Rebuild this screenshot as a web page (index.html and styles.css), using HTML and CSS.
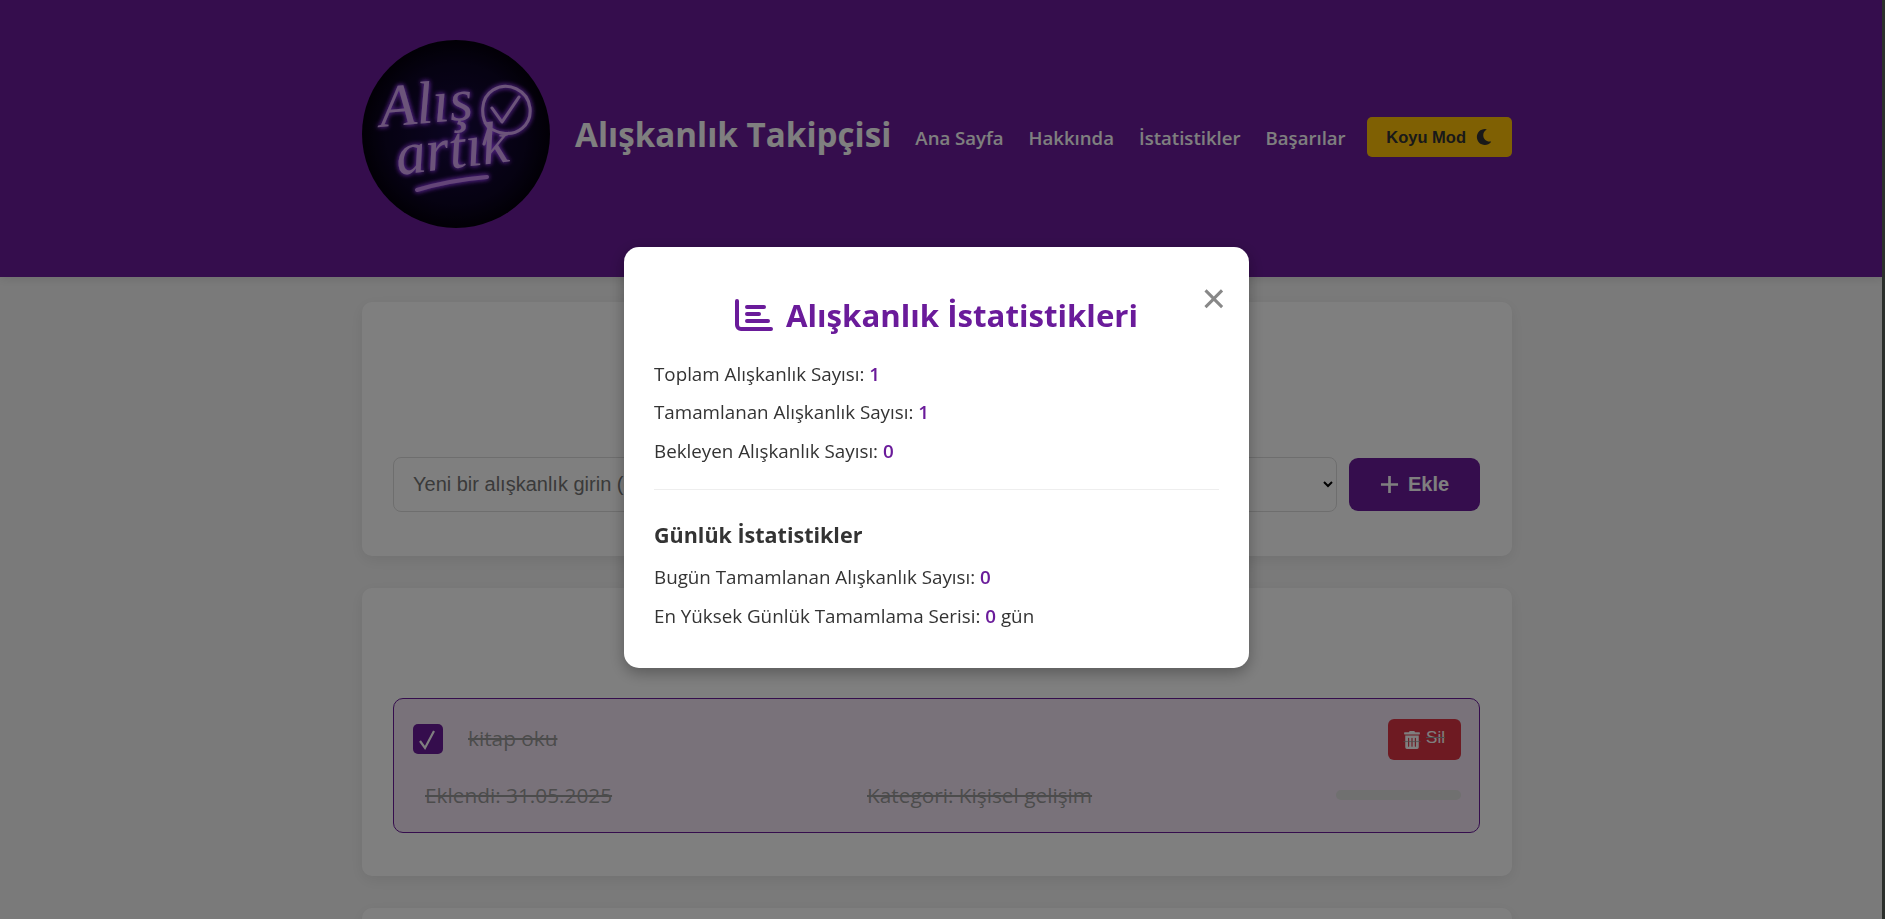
FILE: index.html
```html
<!DOCTYPE html>
<html lang="tr">
<head>
    <meta charset="UTF-8">
    <meta name="viewport" content="width=device-width, initial-scale=1.0">
    <title>Alışkanlık Takipçisi</title>
    <link rel="stylesheet" href="styles.css">
</head>
<body>
    <header class="site-header">
        <div class="wrap header-row">
            <svg class="logo" viewBox="0 0 188 188" role="img" aria-label="Alış artık">
                <defs>
                    <radialGradient id="logoBg" cx="50%" cy="50%" r="50%">
                        <stop offset="0" stop-color="#180a44"/>
                        <stop offset="0.75" stop-color="#0c0424"/>
                        <stop offset="1" stop-color="#04000c"/>
                    </radialGradient>
                    <filter id="glow" x="-30%" y="-30%" width="160%" height="160%">
                        <feGaussianBlur stdDeviation="2.6" result="blur"/>
                        <feFlood flood-color="#a040ff"/>
                        <feComposite in2="blur" operator="in" result="tint"/>
                        <feMerge>
                            <feMergeNode in="tint"/>
                            <feMergeNode in="tint"/>
                            <feMergeNode in="SourceGraphic"/>
                        </feMerge>
                    </filter>
                </defs>
                <circle cx="94" cy="94" r="94" fill="url(#logoBg)"/>
                <g filter="url(#glow)">
                    <text class="logo-word" x="19" y="87" transform="rotate(-5 19 87)">Alış</text>
                    <text class="logo-word" x="36" y="135" transform="rotate(-7 36 135)">artık</text>
                    <g class="logo-line">
                        <path d="M127 88 C118 78 118 58 131 50 C146 41 166 50 168 68 C170 86 154 96 140 93 C135 92 131 90 127 88 L122 104"/>
                        <path d="M130 68 L140 82 L157 57"/>
                    </g>
                    <path class="logo-swash" d="M55 150 C78 143 102 139 125 137"/>
                </g>
            </svg>
            <h1 class="site-title">Alışkanlık Takipçisi</h1>
            <nav class="main-nav">
                <a href="#">Ana Sayfa</a>
                <a href="#">Hakkında</a>
                <a href="#">İstatistikler</a>
                <a href="#">Başarılar</a>
                <button class="theme-btn" type="button">Koyu Mod
                    <svg class="moon" viewBox="0 0 512 512"><path d="M283.211 512c78.962 0 151.079-35.925 198.857-94.792 7.068-8.708-.639-21.43-11.562-19.35-124.203 23.654-238.262-71.576-238.262-196.954 0-72.222 38.662-138.635 101.498-174.394 9.686-5.512 7.25-20.197-3.756-22.23A258.156 258.156 0 0 0 283.211 0c-141.309 0-256 114.511-256 256 0 141.309 114.511 256 256 256z"/></svg>
                </button>
            </nav>
        </div>
    </header>

    <main class="wrap">
        <section class="card add-card">
            <form class="add-form">
                <input class="habit-input" type="text" placeholder="Yeni bir alışkanlık girin (örn: Su iç)">
                <select class="habit-select"><option>Kategori</option></select>
                <button class="add-btn" type="button">
                    <svg class="plus" viewBox="0 0 20 20"><path d="M10 1v18M1 10h18"/></svg>
                    Ekle
                </button>
            </form>
        </section>

        <section class="card list-card">
            <div class="habit done">
                <div class="habit-top">
                    <span class="check">
                        <svg viewBox="0 0 30 30"><path d="M7 17 L12 24 L21 7"/></svg>
                    </span>
                    <span class="habit-name">kitap oku</span>
                    <button class="del-btn" type="button">
                        <svg class="trash" viewBox="0 0 448 512"><path d="M32 464a48 48 0 0 0 48 48h288a48 48 0 0 0 48-48V128H32zm272-256a16 16 0 0 1 32 0v224a16 16 0 0 1-32 0zm-96 0a16 16 0 0 1 32 0v224a16 16 0 0 1-32 0zm-96 0a16 16 0 0 1 32 0v224a16 16 0 0 1-32 0zM432 32H312l-9.4-18.7A24 24 0 0 0 281.1 0H166.8a23.72 23.72 0 0 0-21.4 13.3L136 32H16A16 16 0 0 0 0 48v32a16 16 0 0 0 16 16h416a16 16 0 0 0 16-16V48a16 16 0 0 0-16-16z"/><path class="trash-strike" d="M-20 300H468"/></svg>
                        <span>Sil</span>
                    </button>
                </div>
                <div class="habit-meta">
                    <span class="meta-date">Eklendi: 31.05.2025</span>
                    <span class="meta-cat">Kategori: Kişisel gelişim</span>
                    <span class="progress"></span>
                </div>
            </div>
        </section>

        <section class="card empty-card"></section>
    </main>

    <div class="overlay">
        <div class="modal">
            <button class="modal-close" type="button">&times;</button>
            <h2 class="modal-title">
                <svg class="chart-icon" viewBox="0 0 38 32"><path class="axis" d="M2 2V26a4 4 0 0 0 4 4H36"/><path class="bars" d="M12 8H29M12 15H24M12 22H33"/></svg>
                Alışkanlık İstatistikleri
            </h2>
            <p class="stat">Toplam Alışkanlık Sayısı: <strong>1</strong></p>
            <p class="stat">Tamamlanan Alışkanlık Sayısı: <strong>1</strong></p>
            <p class="stat">Bekleyen Alışkanlık Sayısı: <strong>0</strong></p>
            <hr class="modal-rule">
            <h3 class="modal-sub">Günlük İstatistikler</h3>
            <p class="stat">Bugün Tamamlanan Alışkanlık Sayısı: <strong>0</strong></p>
            <p class="stat">En Yüksek Günlük Tamamlama Serisi: <strong>0</strong> gün</p>
        </div>
    </div>

    <div class="scroll-strip"></div>
</body>
</html>
```

FILE: styles.css
```css
* {
    box-sizing: border-box;
}
html, body {
    height: 919px;
    overflow: hidden;
}
body {
    margin: 0;
    font-family: "Open Sans", sans-serif;
    background-color: #f5f5f5;
    color: #333;
}
.wrap {
    width: 1150px;
    margin-left: 362px;
}

/* header */
.site-header {
    height: 277px;
    padding-top: 40px;
    background: #6a1b9a;
    box-shadow: 0 2px 10px rgba(0, 0, 0, 0.1);
}
.header-row {
    display: flex;
    align-items: center;
    height: 188px;
}
.logo {
    width: 188px;
    height: 188px;
    flex: none;
    margin-right: 25px;
}
.logo-word {
    font-family: "Liberation Serif", serif;
    font-style: italic;
    font-size: 60px;
    fill: #d8a8f5;
}
.logo-line {
    fill: none;
    stroke: #d8a8f5;
    stroke-width: 3;
    stroke-linecap: round;
    stroke-linejoin: round;
}
.logo-swash {
    fill: none;
    stroke: #c88af0;
    stroke-width: 4;
    stroke-linecap: round;
}
.site-title {
    margin: 0 24px 0 0;
    font-size: 33.2px;
    font-weight: 700;
    color: #fff;
    white-space: nowrap;
}
.main-nav {
    display: flex;
    align-items: center;
    gap: 25px;
    margin-top: 7px;
}
.main-nav a {
    font-size: 18.6px;
    font-weight: 600;
    color: #fff;
    text-decoration: none;
    white-space: nowrap;
}
.theme-btn {
    display: flex;
    align-items: center;
    justify-content: center;
    gap: 10px;
    width: 145px;
    height: 40px;
    margin: -1px 0 0 -4px;
    background: #ffc107;
    color: #333;
    border: none;
    border-radius: 5px;
    font-family: "Liberation Sans", sans-serif;
    font-size: 16.5px;
    font-weight: 700;
}
.moon {
    width: 16px;
    height: 16px;
    fill: #333;
}

/* cards */
.card {
    background: #fff;
    border-radius: 10px;
    box-shadow: 0 4px 15px rgba(0, 0, 0, 0.08);
    padding: 0 32px 0 31px;
    margin-bottom: 32px;
}
.add-card {
    height: 254px;
    margin-top: 25px;
    padding-top: 155px;
}
.add-form {
    display: flex;
    gap: 12px;
}
.habit-input {
    width: 500px;
    height: 55px;
    padding: 0 19px;
    border: 1px solid #ddd;
    border-radius: 8px;
    background: #fff;
    font-family: "Liberation Sans", sans-serif;
    font-size: 20px;
}
.habit-select {
    flex: 1;
    height: 55px;
    padding: 0 20px;
    border: 1px solid #ddd;
    border-radius: 8px;
    background: #fff;
    font-size: 18px;
}
.add-btn {
    display: flex;
    align-items: center;
    justify-content: center;
    gap: 9px;
    width: 131px;
    height: 53px;
    margin-top: 1px;
    background: #6a1b9a;
    color: #fff;
    border: none;
    border-radius: 9px;
    font-family: "Liberation Sans", sans-serif;
    font-size: 20px;
    font-weight: 700;
}
.plus {
    width: 19px;
    height: 19px;
    fill: none;
    stroke: #fff;
    stroke-width: 2.8;
}
.list-card {
    height: 288px;
    padding-top: 110px;
}
.empty-card {
    height: 200px;
}

/* habit row */
.habit {
    height: 135px;
    padding: 20px 18px 0 19px;
    background: #f3e5f5;
    border: 1px solid #6a1b9a;
    border-radius: 10px;
}
.habit-top {
    display: flex;
    align-items: flex-start;
}
.check {
    width: 30px;
    height: 30px;
    margin-top: 5px;
    background: #6a1b9a;
    border-radius: 5px;
}
.check svg {
    display: block;
    fill: none;
    stroke: #fff;
    stroke-width: 2.2;
}
.habit-name {
    margin: 5px 0 0 25px;
    flex: 1;
    font-size: 20.8px;
    color: #999;
    text-decoration: line-through;
}
.del-btn {
    display: flex;
    align-items: center;
    justify-content: center;
    gap: 6px;
    width: 73px;
    height: 41px;
    background: #dc3545;
    color: #fff;
    border: none;
    border-radius: 6px;
    font-family: "Liberation Sans", sans-serif;
    font-size: 17px;
}
.del-btn span {
    margin-bottom: 3px;
    text-decoration: line-through;
    text-decoration-color: #999;
}
.trash {
    width: 16px;
    height: 18px;
    fill: #fff;
    overflow: visible;
}
.trash-strike {
    stroke: #999;
    stroke-width: 20;
}
.habit-meta {
    display: flex;
    align-items: center;
    margin-top: 21px;
    padding-left: 12px;
    font-size: 20.8px;
    color: #999;
}
.meta-date {
    width: 442px;
    text-decoration: line-through;
}
.meta-cat {
    flex: 1;
    text-decoration: line-through;
}
.progress {
    width: 125px;
    height: 10px;
    background: #e0e0e0;
    border-radius: 5px;
}

/* statistics modal */
.overlay {
    position: fixed;
    top: 0;
    right: 3px;
    bottom: 0;
    left: 0;
    display: flex;
    justify-content: center;
    align-items: flex-start;
    padding: 247px 9px 0 0;
    background: rgba(0, 0, 0, 0.5);
}
.modal {
    position: relative;
    width: 625px;
    height: 421px;
    padding: 30px;
    background: #fff;
    border-radius: 15px;
    box-shadow: 0 5px 15px rgba(0, 0, 0, 0.3);
}
.modal-close {
    position: absolute;
    top: 32px;
    right: 23px;
    padding: 0;
    border: none;
    background: none;
    font-family: "Liberation Sans", sans-serif;
    font-size: 42px;
    line-height: 40px;
    color: #888;
}
.modal-title {
    display: flex;
    align-items: center;
    justify-content: center;
    gap: 13px;
    margin: 16px 0 24px;
    font-size: 31.2px;
    line-height: 44px;
    font-weight: 700;
    color: #6a1b9a;
}
.chart-icon {
    width: 38px;
    height: 32px;
    fill: none;
    stroke: #6a1b9a;
    stroke-linecap: round;
    stroke-linejoin: round;
}
.axis {
    stroke-width: 4;
}
.bars {
    stroke-width: 4;
}
.stat {
    margin: 0 0 12px;
    font-size: 18.8px;
    line-height: 26.4px;
}
.stat strong {
    color: #6a1b9a;
    font-weight: 600;
}
.modal-rule {
    margin: 25px 0 30px;
    border: none;
    border-top: 1px solid #eee;
}
.modal-sub {
    margin: 0 0 14px;
    font-size: 21.5px;
    line-height: 30px;
    font-weight: 700;
    color: #333;
}
.scroll-strip {
    position: fixed;
    top: 0;
    right: 0;
    bottom: 0;
    width: 3px;
    background: #2b2f2b;
}
```
